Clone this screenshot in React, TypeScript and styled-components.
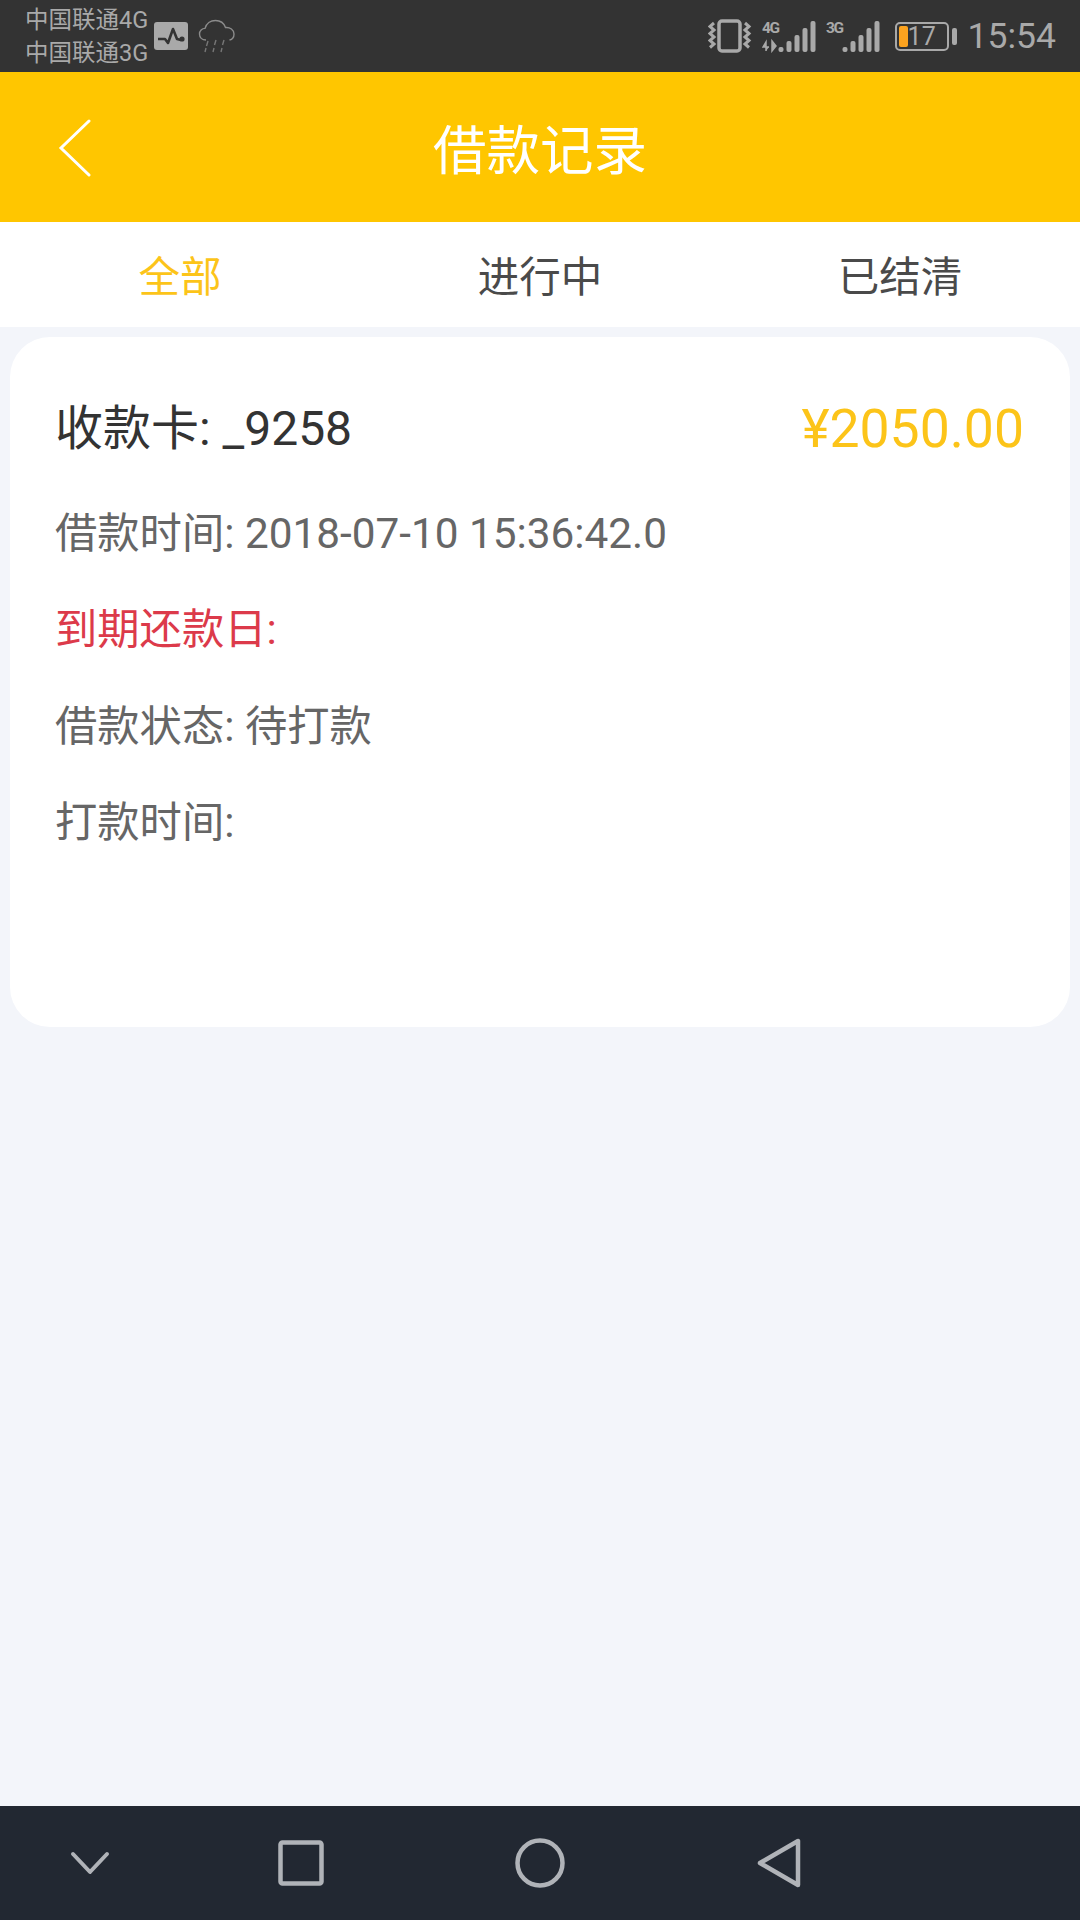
import React from "react";
import styled, { createGlobalStyle } from "styled-components";

const Global = createGlobalStyle`
  html, body { margin: 0; padding: 0; background: #f3f5fa; }
  * { box-sizing: border-box; }
  body { font-family: Roboto, "Noto Sans CJK SC", sans-serif; }
`;

const Page = styled.div`
  width: 1080px;
  height: 1920px;
  display: flex;
  flex-direction: column;
  background: #f3f5fa;
  overflow: hidden;
`;

const StatusBar = styled.div`
  height: 72px;
  flex: none;
  background: #333333;
  display: flex;
  align-items: center;
  justify-content: space-between;
  padding: 0 24px 0 25px;
  color: #a9a9a9;
`;
const StatusGroup = styled.div`
  display: flex;
  align-items: center;
`;
const Carriers = styled.div`
  display: flex;
  flex-direction: column;
  font-size: 23.5px;
  line-height: 33px;
  white-space: nowrap;
  width: 129px;
  margin-top: 2px;
`;
const Clock = styled.div`
  font-size: 35.5px;
  line-height: 40px;
  color: #a9a9a9;
  margin-left: 11px;
`;
const BatteryBody = styled.div`
  width: 54px;
  height: 29px;
  border: 2px solid #a9a9a9;
  border-radius: 5px;
  display: flex;
  align-items: center;
  padding-left: 2px;
  font-size: 25px;
  line-height: 25px;
  color: #a9a9a9;
  margin-left: 15px;
`;
const BatteryFill = styled.div`
  width: 9px;
  height: 21px;
  background: #fca31f;
  border-radius: 2px;
  flex: none;
`;
const BatteryCap = styled.div`
  width: 5px;
  height: 17px;
  background: #a9a9a9;
  border-radius: 2px;
  margin-left: 3px;
`;

const Header = styled.header`
  height: 150px;
  flex: none;
  background: #ffc600;
  display: flex;
  align-items: center;
  justify-content: center;
  position: relative;
`;
const Title = styled.h1`
  margin: 0;
  font-size: 53.5px;
  font-weight: 400;
  color: #fff;
  font-family: "Noto Sans CJK SC", sans-serif;
  line-height: 1;
`;
const BackButton = styled.div`
  position: absolute;
  left: 58px;
  top: 47px;
  display: flex;
`;

const Tabs = styled.nav`
  height: 105px;
  flex: none;
  background: #fff;
  display: grid;
  grid-template-columns: 360px 360px 360px;
`;
const Tab = styled.div<{ $active?: boolean }>`
  display: flex;
  align-items: center;
  justify-content: center;
  font-size: 41.5px;
  font-family: "Noto Sans CJK SC", sans-serif;
  color: ${(p) => (p.$active ? "#fcc419" : "#4a4a4a")};
  padding-bottom: 2px;
`;

const Content = styled.main`
  flex: 1;
  padding: 10px 10px 0;
`;
const Card = styled.section`
  height: 690px;
  background: #fff;
  border-radius: 40px;
  padding: 61px 46px 0 45px;
  display: flex;
  flex-direction: column;
`;
const CardHead = styled.div`
  display: flex;
  justify-content: space-between;
  align-items: center;
  height: 62px;
  margin-bottom: 45px;
`;
const CardTitle = styled.div`
  font-size: 48px;
  color: #333;
  line-height: 62px;
`;
const Amount = styled.div`
  font-size: 53.5px;
  font-weight: 400;
  color: #fcc419;
  line-height: 62px;
`;
const Line = styled.div<{ $alert?: boolean }>`
  font-size: 42.3px;
  line-height: 58px;
  height: 58px;
  margin-bottom: 38.4px;
  color: ${(p) => (p.$alert ? "#dc3a4a" : "#666")};
`;

const NavBar = styled.footer`
  height: 114px;
  flex: none;
  background: #222832;
  position: relative;
  display: flex;
  align-items: center;
  padding-left: 70px;
`;
const NavSlot = styled.div<{ $w: number }>`
  width: ${(p) => p.$w}px;
  flex: none;
  display: flex;
`;

const Pulse = () => (
  <svg width="34" height="28" viewBox="0 0 34 28">
    <rect width="34" height="28" rx="3" fill="#a9a9a9" />
    <path d="M4 17h7l3 4 5-14 4 10 4 1" fill="none" stroke="#333" strokeWidth="2.6" strokeLinejoin="round" />
    <circle cx="28" cy="17" r="2.6" fill="#333" />
  </svg>
);
const Rain = () => (
  <svg width="38" height="34" viewBox="0 0 38 34" style={{ marginLeft: 10 }}>
    <path d="M8 21c-4 0-6.500-2.600-6.500-6 0-3.200 2.500-5.600 5.500-5.600C8.300 4.600 12.500 1.500 17.500 1.500c5 0 8.600 3 10 7 4.500-.5 8.500 2.400 8.500 6.500 0 3.400-2 5.500-4.500 6" fill="none" stroke="#8b8b8b" strokeWidth="1.4" />
    <path d="M10 22l-1.500 5M18 21l-1.500 5M26 21l-1.500 5M8 29l-1 4M16 29l-1 4M24 29l-1 4" stroke="#777" strokeWidth="1.4" />
  </svg>
);
const Vibrate = () => (
  <svg width="44" height="34" viewBox="0 0 44 34" fill="none" stroke="#a9a9a9">
    <rect x="11" y="2" width="21" height="30" rx="3" strokeWidth="3.5" />
    <path d="M6 4 2 7.500 6 11l-4 3.500L6 18l-4 3.500L6 25l-4 3.500" strokeWidth="3" />
    <path d="M37 4 41 7.500 37 11l4 3.500L37 18l4 3.500L37 25l4 3.500" strokeWidth="3" />
  </svg>
);
const SignalIcon = styled.svg`
  margin-left: 10px;
`;
const Signal = ({ label, arrows }: { label: string; arrows?: boolean }) => (
  <SignalIcon width="54" height="34" viewBox="0 0 54 34">
    <text x="0" y="14" fontSize="15.5" fontWeight="700" fill="#a9a9a9" fontFamily="Roboto, sans-serif" textLength="18">
      {label}
    </text>
    {arrows && <path d="M4 32V23l-3 5h6M10 22v10l4-5z" fill="#a9a9a9" stroke="#a9a9a9" strokeWidth="1.5" />}
    {[
      [18, 27],
      [26, 21],
      [34, 15],
      [42, 8],
      [50, 1],
    ].map(([x, y]) => (
      <rect key={x} x={x - 1.5} y={y + 1} width="5" height={32 - y} rx="2" fill="#a9a9a9" />
    ))}
  </SignalIcon>
);

export default function App() {
  return (
    <Page>
      <Global />
      <StatusBar>
        <StatusGroup>
          <Carriers>
            <span>中国联通4G</span>
            <span>中国联通3G</span>
          </Carriers>
          <Pulse />
          <Rain />
        </StatusGroup>
        <StatusGroup>
          <Vibrate />
          <Signal label="4G" arrows />
          <Signal label="3G" />
          <BatteryBody>
            <BatteryFill />
            17
          </BatteryBody>
          <BatteryCap />
          <Clock>15:54</Clock>
        </StatusGroup>
      </StatusBar>
      <Header>
        <BackButton>
          <svg width="34" height="58" viewBox="0 0 34 58" fill="none" stroke="#fff" strokeWidth="3" strokeLinecap="round">
            <path d="M31 2 3 29l28 27" />
          </svg>
        </BackButton>
        <Title>借款记录</Title>
      </Header>
      <Tabs>
        <Tab $active>全部</Tab>
        <Tab>进行中</Tab>
        <Tab>已结清</Tab>
      </Tabs>
      <Content>
        <Card>
          <CardHead>
            <CardTitle>收款卡: _9258</CardTitle>
            <Amount>¥2050.00</Amount>
          </CardHead>
          <Line>借款时间: 2018-07-10 15:36:42.0</Line>
          <Line $alert>到期还款日:</Line>
          <Line>借款状态: 待打款</Line>
          <Line>打款时间:</Line>
        </Card>
      </Content>
      <NavBar>
        <NavSlot $w={208}>
          <svg width="40" height="24" viewBox="0 0 40 24" fill="none" stroke="#b0b3b8" strokeWidth="4" strokeLinecap="round" strokeLinejoin="round">
            <path d="M3 3l17 18L37 3" />
          </svg>
        </NavSlot>
        <NavSlot $w={237}>
          <svg width="46" height="46" viewBox="0 0 46 46" fill="none" stroke="#b0b3b8" strokeWidth="4.5" strokeLinejoin="round">
            <rect x="2.5" y="2.5" width="41" height="41" rx="2" />
          </svg>
        </NavSlot>
        <NavSlot $w={242}>
          <svg width="50" height="50" viewBox="0 0 50 50" fill="none" stroke="#b0b3b8" strokeWidth="4.5">
            <circle cx="25" cy="25" r="22.5" />
          </svg>
        </NavSlot>
        <NavSlot $w={50}>
          <svg width="44" height="50" viewBox="0 0 44 50" fill="none" stroke="#b0b3b8" strokeWidth="4.5" strokeLinejoin="round">
            <path d="M41 3v44L3 25z" />
          </svg>
        </NavSlot>
      </NavBar>
    </Page>
  );
}
